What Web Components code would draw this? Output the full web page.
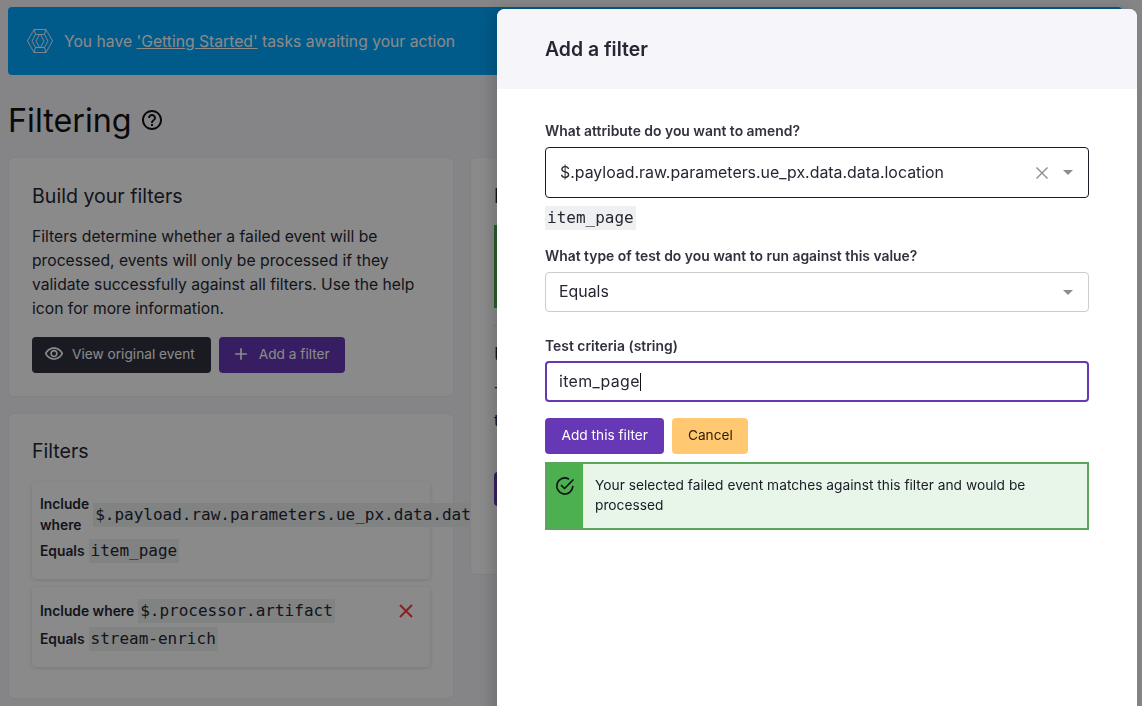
<!DOCTYPE html>
<html lang="en">
<head>
<meta charset="utf-8">
<title>Filtering</title>
<style>
  html, body { margin: 0; height: 100%; overflow: hidden; }
  body { background: #f6f6fa; color: #262733; font-family: Inter, "Liberation Sans", sans-serif; font-size: 16px; }
</style>
</head>
<body>
<filter-page>
  <task-banner>You have <a>'Getting Started'</a> tasks awaiting your action</task-banner>
  <page-title>Filtering</page-title>
  <div slot="left">
    <ui-card heading="Build your filters">
      <p>Filters determine whether a failed event will be processed, events will only be processed if they validate successfully against all filters. Use the help icon for more information.</p>
      <div class="actions">
        <ui-button variant="dark" icon="eye">View original event</ui-button>
        <ui-button variant="purple" icon="plus">Add a filter</ui-button>
      </div>
    </ui-card>
    <ui-card heading="Filters" class="list">
      <filter-rule attr="$.payload.raw.parameters.ue_px.data.data.location" value="item_page"></filter-rule>
      <filter-rule attr="$.processor.artifact" value="stream-enrich" removable></filter-rule>
    </ui-card>
  </div>
  <results-card slot="right"></results-card>
</filter-page>
<page-overlay></page-overlay>
<side-panel heading="Add a filter">
  <form-field label="What attribute do you want to amend?">
    <select-box value="$.payload.raw.parameters.ue_px.data.data.location" active clearable></select-box>
    <code-chip class="hint">item_page</code-chip>
  </form-field>
  <form-field label="What type of test do you want to run against this value?" class="second">
    <select-box value="Equals"></select-box>
  </form-field>
  <form-field label="Test criteria (string)" class="third">
    <text-box value="item_page"></text-box>
  </form-field>
  <div class="panel-actions">
    <ui-button variant="purple-live">Add this filter</ui-button>
    <ui-button variant="amber">Cancel</ui-button>
  </div>
  <alert-box>Your selected failed event matches against this filter and would be processed</alert-box>
</side-panel>

<script>
const ICONS = {
  eye: '<path d="M12 6c3.79 0 7.17 2.13 8.82 5.5C19.17 14.87 15.79 17 12 17s-7.17-2.13-8.82-5.5C4.83 8.13 8.21 6 12 6m0-2C7 4 2.73 7.11 1 11.5 2.73 15.89 7 19 12 19s9.27-3.11 11-7.5C21.27 7.11 17 4 12 4zm0 5c1.38 0 2.5 1.12 2.5 2.5S13.38 14 12 14s-2.5-1.12-2.5-2.5S10.62 9 12 9m0-2c-2.48 0-4.5 2.02-4.5 4.5S9.52 16 12 16s4.5-2.02 4.5-4.5S14.48 7 12 7z"/>',
  plus: '<path d="M19 13h-6v6h-2v-6H5v-2h6V5h2v6h6v2z"/>'
};

// base class, every element just renders its html into an open shadow root
class Base extends HTMLElement {
  connectedCallback() {
    if (!this.shadowRoot) this.attachShadow({ mode: "open" });
    this.shadowRoot.innerHTML = this.render();
  }
}

class FilterPage extends Base {
  render() {
    return `<style>
      :host { display: block; padding: 7px 20px 0 8px; }
      .cols { display: grid; grid-template-columns: 446px 1fr; gap: 16px; align-items: start; }
    </style>
    <slot></slot>
    <div class="cols"><slot name="left"></slot><slot name="right"></slot></div>`;
  }
}

class TaskBanner extends Base {
  render() {
    return `<style>
      :host { display: flex; align-items: center; gap: 10px; height: 68px; padding-left: 18px; box-sizing: border-box;
        background: #00a8ff; color: #fff; border-radius: 4px; font-size: 15.700px; }
      svg { width: 28px; height: 28px; flex: none; }
      ::slotted(a) { text-decoration: underline; }
    </style>
    <svg viewBox="0 0 28 28" fill="none" stroke="#fff" stroke-width=".9" stroke-linejoin="round">
      <path d="M8 2.500h12L26.500 14 20 25.500H8L1.500 14z"/>
      <path d="M9.500 7.500h5l3.500 6.500-3.500 6.500h-5L6 14z"/>
      <path d="M13.500 7.500h5L22 14l-3.500 6.500h-5L10 14z"/>
      <path d="M8 2.500l1.500 5M20 2.500l-1.500 5M8 25.500l1.500-5M20 25.500l-1.500-5"/>
    </svg>
    <span><slot></slot></span>`;
  }
}

class PageTitle extends Base {
  render() {
    return `<style>
      :host { display: flex; align-items: center; gap: 8px; height: 82px; box-sizing: border-box; padding-top: 8px; font-size: 32.300px; color: #111; }
      svg { width: 24px; height: 24px; fill: #111; }
    </style>
    <slot></slot>
    <svg viewBox="0 0 24 24"><path d="M11 18h2v-2h-2v2zm1-16C6.480 2 2 6.480 2 12s4.480 10 10 10 10-4.480 10-10S17.520 2 12 2zm0 18c-4.410 0-8-3.590-8-8s3.590-8 8-8 8 3.590 8 8-3.590 8-8 8zm0-14c-2.210 0-4 1.790-4 4h2c0-1.100.9-2 2-2s2 .9 2 2c0 2-3 1.750-3 5h2c0-2.250 3-2.500 3-5 0-2.210-1.790-4-4-4z"/></svg>`;
  }
}

class UiCard extends Base {
  render() {
    return `<style>
      :host { display: block; background: #fff; border: 1px solid #eeeef2; border-radius: 6px; box-sizing: border-box;
        padding: 23px; margin-bottom: 16px; }
      :host(.list) { height: 286px; padding-top: 22px; }
      h2 { margin: 0 0 14px; font-size: 19.600px; font-weight: 400; line-height: 30px; color: #262733; }
      :host(.list) h2 { margin-bottom: 16px; }
      ::slotted(p) { margin: 0 0 16px; line-height: 24px; font-size: 15.700px; }
      ::slotted(.actions) { display: flex; gap: 8px; }
    </style>
    <h2>${this.getAttribute("heading")}</h2>
    <slot></slot>`;
  }
}

class UiButton extends Base {
  render() {
    const icon = ICONS[this.getAttribute("icon")];
    return `<style>
      :host { display: inline-flex; align-items: center; height: 36px; box-sizing: border-box; border-radius: 4px;
        font-size: 13.700px; white-space: nowrap; color: #fff; padding: 0 16px 2px; }
      :host([variant="dark"]) { background: #30323f; padding: 0 16px 2px 12px; }
      :host([variant="purple"]) { background: #6638b6; padding: 0 15.500px 2px 12px; }
      :host([variant="purple-live"]) { background: #6638b6; padding: 0 16.500px 2px; }
      :host([variant="amber"]) { background: #ffc871; color: #2b1d05; padding: 0 15.500px 2px; }
      svg { width: 20px; height: 20px; fill: currentColor; margin-right: 8px; flex: none; }
    </style>
    ${icon ? `<svg viewBox="0 0 24 24">${icon}</svg>` : ""}<slot></slot>`;
  }
}

class CodeChip extends Base {
  render() {
    return `<style>
      :host { display: inline-block; background: #eef0f1; padding: 0 2px; font: 400 16px/24px "DejaVu Sans Mono", "Liberation Mono", monospace;
        white-space: nowrap; color: #262733; flex: none; }
      :host(.hint) { margin-top: 8px; }
    </style><slot></slot>`;
  }
}

class FilterRule extends Base {
  render() {
    const removable = this.hasAttribute("removable");
    return `<style>
      :host { display: block; padding: 12px 8px 16px; margin-bottom: 8px; background: #fff; border-radius: 4px;
        box-shadow: 0 1px 4px rgba(0,0,0,.14); }
      .row { display: flex; align-items: center; gap: 4px; font-size: 13.800px; font-weight: 600; line-height: 20.500px; color: #262733; }
      .row + .row { margin-top: 4px; }
      .x { margin-left: auto; margin-right: 8px; width: 16px; height: 16px; flex: none; }
    </style>
    <div class="row"><span>Include where</span><code-chip>${this.getAttribute("attr")}</code-chip>
      ${removable ? `<svg class="x" viewBox="0 0 16 16"><path d="M2 2l12 12M14 2L2 14" stroke="#ff3b3b" stroke-width="2" fill="none"/></svg>` : ""}
    </div>
    <div class="row"><span>Equals</span><code-chip>${this.getAttribute("value")}</code-chip></div>`;
  }
}

// only its left edge shows, the rest sits behind the panel
class ResultsCard extends Base {
  render() {
    return `<style>
      :host { display: block; position: relative; height: 418px; background: #fff; border: 1px solid #eeeef2; border-radius: 6px;
        box-sizing: border-box; padding: 23px; overflow: hidden; }
      h2 { margin: 0; font-size: 19.600px; font-weight: 500; line-height: 30px; white-space: nowrap; }
      .ok { height: 83px; margin-top: 14px; background: #4caf50; }
      hr { border: 0; border-top: 1px solid #dcdce2; margin: 17px 0 0; }
      h2.next { margin-top: 14px; }
      p { margin: 10px 0 0; line-height: 27px; font-size: 16px; white-space: nowrap; }
      .btn { width: 160px; height: 34px; margin-top: 38px; background: #6638b6; border-radius: 4px; }
    </style>
    <h2>Event</h2>
    <div class="ok"></div>
    <hr>
    <h2 class="next">Use</h2>
    <p>The<br>the</p>
    <div class="btn"></div>`;
  }
}

class PageOverlay extends Base {
  render() {
    return `<style>:host { display: block; position: fixed; inset: 0; background: rgba(0,0,0,.46); }</style>`;
  }
}

class SidePanel extends Base {
  render() {
    return `<style>
      :host { display: block; position: fixed; top: 9px; left: 497px; width: 640px; height: 760px; background: #fff;
        border-radius: 8px 8px 0 0; box-shadow: -6px 0 14px rgba(0,0,0,.16); overflow: hidden; }
      header { height: 80px; display: flex; align-items: center; padding: 0 48px; background: #f5f5fa;
        font-size: 19.400px; font-weight: 600; color: #262733; }
      .body { padding: 32px 48px; }
      ::slotted(.second) { margin-top: 16px; }
      ::slotted(.third) { margin-top: 24px; }
      ::slotted(.panel-actions) { display: flex; gap: 8px; margin-top: 16px; }
    </style>
    <header>${this.getAttribute("heading")}</header>
    <div class="body"><slot></slot></div>`;
  }
}

class FormField extends Base {
  render() {
    return `<style>
      :host { display: block; }
      label { display: block; height: 20px; margin-bottom: 6px; font-size: 13.900px; line-height: 20px; font-weight: 600; color: #30323f; }
      :host(.third) label { margin-bottom: 5px; }
    </style>
    <label>${this.getAttribute("label")}</label>
    <slot></slot>`;
  }
}

class SelectBox extends Base {
  render() {
    const clearable = this.hasAttribute("clearable");
    return `<style>
      :host { display: flex; align-items: center; box-sizing: border-box; height: 40px; padding: 0 15px 0 13px; border: 1px solid #ccc;
        border-radius: 4px; font-size: 15.900px; color: #262733; background: #fff; }
      :host([active]) { height: 51px; border-color: #1a1b26; padding-left: 14px; }
      span { flex: 1; white-space: nowrap; margin-top: -1px; }
      :host([active]) span { margin-top: 0; }
      svg { flex: none; }
      .clear { margin-right: 14px; }
    </style>
    <span>${this.getAttribute("value")}</span>
    ${clearable ? `<svg class="clear" width="14" height="14" viewBox="0 0 14 14"><path d="M1.500 1.500l11 11M12.500 1.500l-11 11" stroke="#8d8d8d" stroke-width="1.400" fill="none"/></svg>` : ""}
    <svg width="10" height="5" viewBox="0 0 10 5"><path d="M0 0h10L5 5z" fill="#8d8d8d"/></svg>`;
  }
}

class TextBox extends Base {
  render() {
    return `<style>
      :host { display: flex; align-items: center; box-sizing: border-box; height: 41px; padding: 0 12px; border: 2px solid #6638b6;
        border-radius: 4px; font-size: 15.900px; letter-spacing: .35px; color: #262733; }
      i { display: inline-block; width: 1px; height: 18px; background: #111; }
    </style>
    <span>${this.getAttribute("value")}</span><i></i>`;
  }
}

class AlertBox extends Base {
  render() {
    return `<style>
      :host { display: flex; margin-top: 8px; min-height: 68px; box-sizing: border-box; border: 2px solid #5ba55f; background: #e8f5e9;
        font-size: 13.750px; line-height: 20px; color: #1a1b26; }
      .side { flex: none; width: 36px; background: #4caf50; display: flex; justify-content: center; padding-top: 12px; box-sizing: border-box; }
      svg { width: 20px; height: 20px; }
      .msg { padding: 11px 24px 0 12px; }
    </style>
    <div class="side"><svg viewBox="0 0 20 20" fill="none" stroke="#111" stroke-width="1.700" stroke-linecap="round" stroke-linejoin="round">
      <path d="M17.800 10.500a8 8 0 1 1-4.300-7.600"/><path d="M6.500 9.500l3 3L18 4"/></svg></div>
    <div class="msg"><slot></slot></div>`;
  }
}

customElements.define("filter-page", FilterPage);
customElements.define("task-banner", TaskBanner);
customElements.define("page-title", PageTitle);
customElements.define("ui-card", UiCard);
customElements.define("ui-button", UiButton);
customElements.define("code-chip", CodeChip);
customElements.define("filter-rule", FilterRule);
customElements.define("results-card", ResultsCard);
customElements.define("page-overlay", PageOverlay);
customElements.define("side-panel", SidePanel);
customElements.define("form-field", FormField);
customElements.define("select-box", SelectBox);
customElements.define("text-box", TextBox);
customElements.define("alert-box", AlertBox);
</script>
</body>
</html>
